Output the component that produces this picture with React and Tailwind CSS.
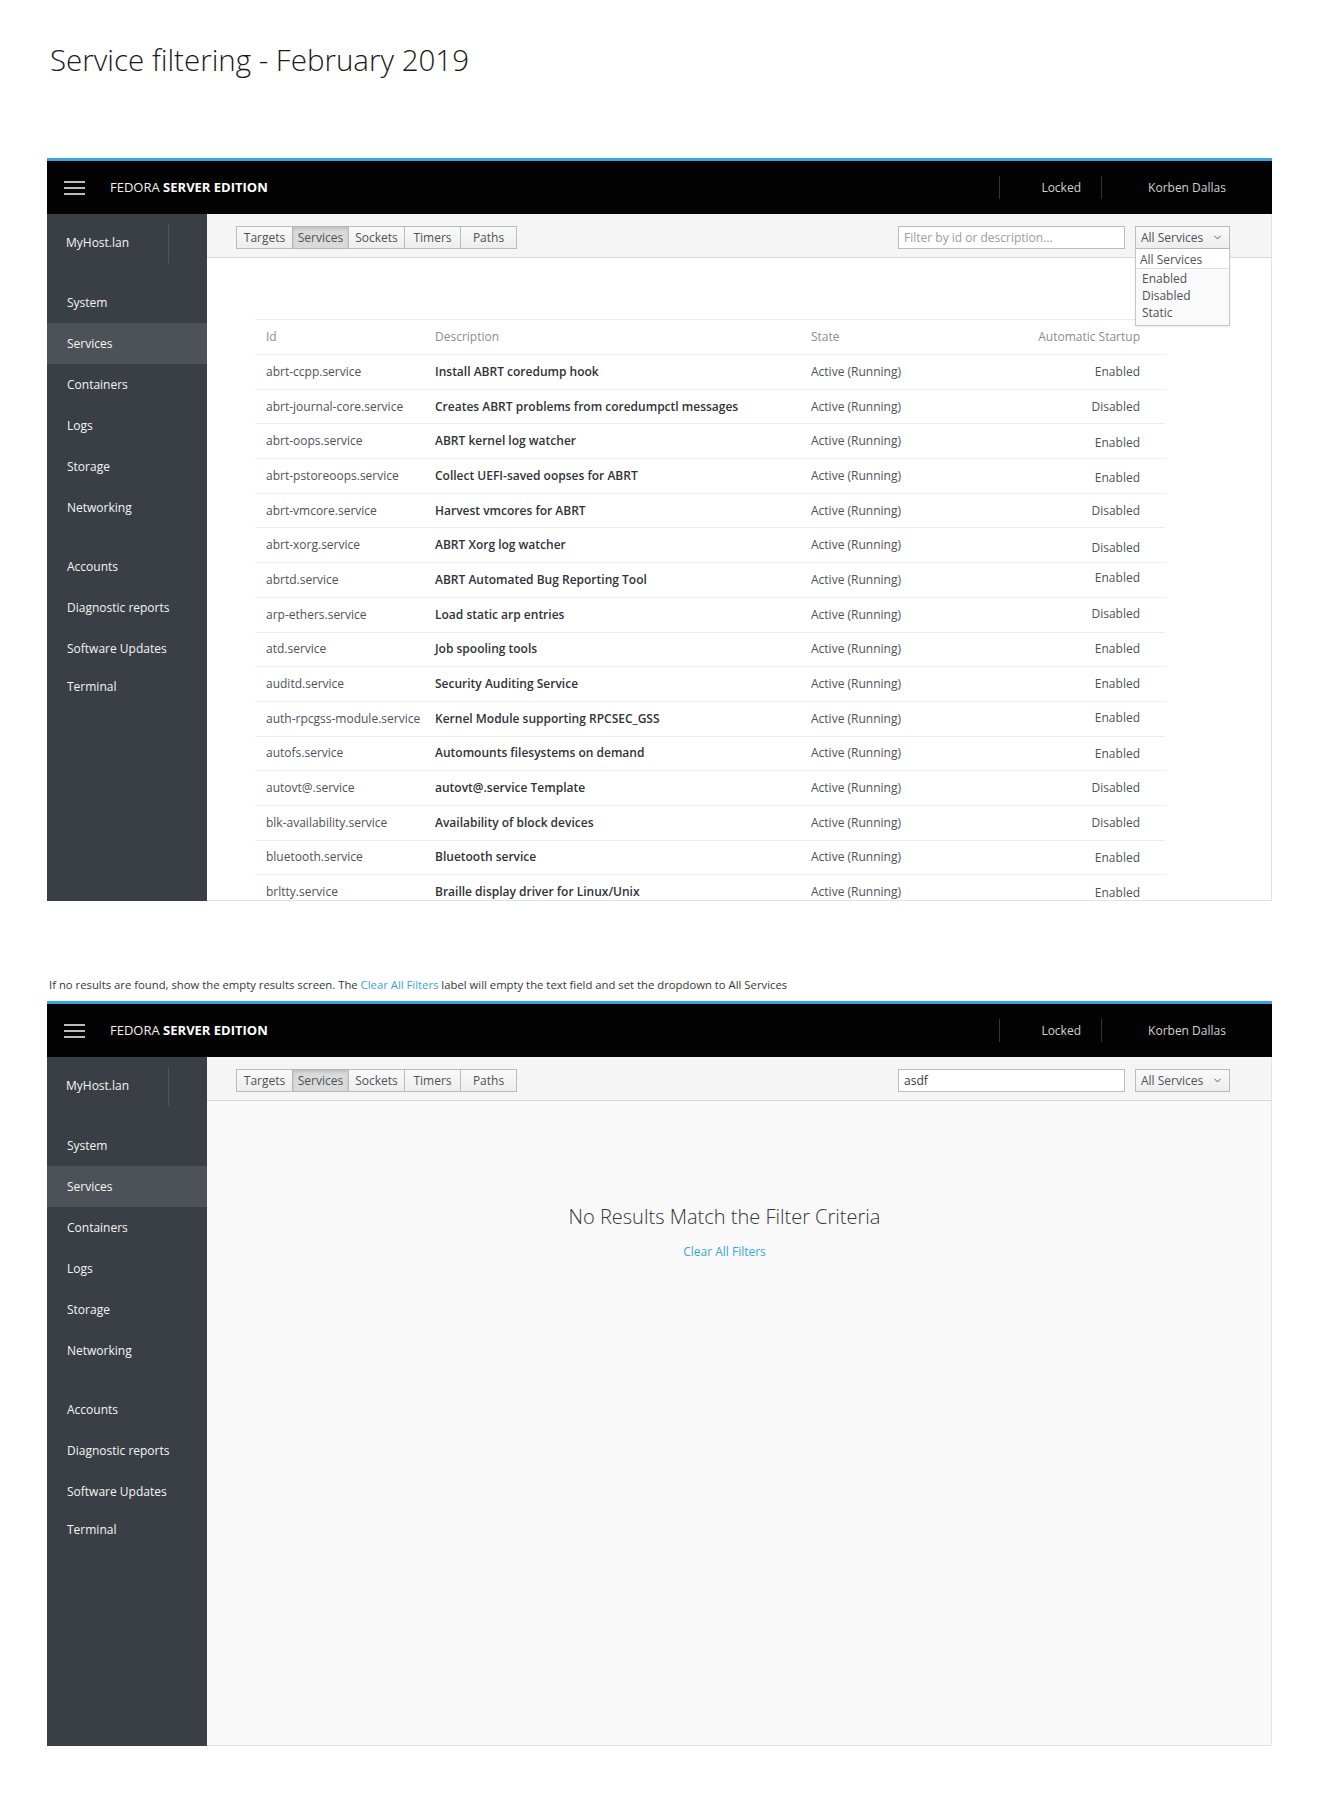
import { ChevronDown } from 'lucide-react';

const services = [
  { id: 'abrt-ccpp.service', desc: 'Install ABRT coredump hook', startup: 'Enabled', nudge: '' },
  { id: 'abrt-journal-core.service', desc: 'Creates ABRT problems from coredumpctl messages', startup: 'Disabled', nudge: '' },
  { id: 'abrt-oops.service', desc: 'ABRT kernel log watcher', startup: 'Enabled', nudge: 'pt-[4px]' },
  { id: 'abrt-pstoreoops.service', desc: 'Collect UEFI-saved oopses for ABRT', startup: 'Enabled', nudge: 'pt-[4px]' },
  { id: 'abrt-vmcore.service', desc: 'Harvest vmcores for ABRT', startup: 'Disabled', nudge: '' },
  { id: 'abrt-xorg.service', desc: 'ABRT Xorg log watcher', startup: 'Disabled', nudge: 'pt-[6px]' },
  { id: 'abrtd.service', desc: 'ABRT Automated Bug Reporting Tool', startup: 'Enabled', nudge: 'pb-[4px]' },
  { id: 'arp-ethers.service', desc: 'Load static arp entries', startup: 'Disabled', nudge: 'pb-[2px]' },
  { id: 'atd.service', desc: 'Job spooling tools', startup: 'Enabled', nudge: '' },
  { id: 'auditd.service', desc: 'Security Auditing Service', startup: 'Enabled', nudge: '' },
  { id: 'auth-rpcgss-module.service', desc: 'Kernel Module supporting RPCSEC_GSS', startup: 'Enabled', nudge: 'pb-[2px]' },
  { id: 'autofs.service', desc: 'Automounts filesystems on demand', startup: 'Enabled', nudge: 'pt-[2px]' },
  { id: 'autovt@.service', desc: 'autovt@.service Template', startup: 'Disabled', nudge: '' },
  { id: 'blk-availability.service', desc: 'Availability of block devices', startup: 'Disabled', nudge: '' },
  { id: 'bluetooth.service', desc: 'Bluetooth service', startup: 'Enabled', nudge: 'pt-[2px]' },
  { id: 'brltty.service', desc: 'Braille display driver for Linux/Unix', startup: 'Enabled', nudge: 'pt-[2px]' },
];

const navGroups = [
  ['System', 'Services', 'Containers', 'Logs', 'Storage', 'Networking'],
  ['Accounts', 'Diagnostic reports', 'Software Updates', 'Terminal'],
];

const tabs = ['Targets', 'Services', 'Sockets', 'Timers', 'Paths'];

function Hamburger() {
  return (
    <svg width="21" height="14" viewBox="0 0 21 14" className="shrink-0">
      <line x1="0" y1="1" x2="21" y2="1" stroke="#d1d1d1" strokeWidth="1.8" />
      <line x1="0" y1="7" x2="21" y2="7" stroke="#d1d1d1" strokeWidth="1.8" />
      <line x1="0" y1="13" x2="21" y2="13" stroke="#d1d1d1" strokeWidth="1.8" />
    </svg>
  );
}

function Masthead() {
  return (
    <div className="h-[53px] bg-[#030303] flex items-center pl-[17px]">
      <Hamburger />
      <div className="ml-[25px] text-[13px] text-[#f0f0f0]">
        FEDORA <span className="font-bold text-white">SERVER EDITION</span>
      </div>
      <div className="ml-auto flex items-center h-full">
        <div className="w-[102px] h-[23px] border-l border-[#333] flex items-center justify-end pr-[20px] text-[12px] text-[#d1d1d1]">
          Locked
        </div>
        <div className="w-[171px] h-[23px] border-l border-[#333] flex items-center justify-center text-[12px] text-[#d1d1d1]">
          Korben Dallas
        </div>
      </div>
    </div>
  );
}

function Sidebar() {
  return (
    <div className="w-[160px] shrink-0 bg-[#393f44] text-[12px] text-[#f5f5f5]">
      <div className="h-[58px] flex items-center pl-[19px]">
        <span>MyHost.lan</span>
        <div className="ml-auto mr-[38px] w-px h-[39px] bg-[#50565b]" />
      </div>
      <div className="mt-[10px]">
        {navGroups.map((group, gi) => (
          <div key={gi} className={gi > 0 ? 'mt-[18px]' : ''}>
            {group.map((item) => (
              <div
                key={item}
                className={`flex items-center pl-[20px] ${item === 'Terminal' ? 'h-[35px]' : 'h-[41px]'} ${item === 'Services' ? 'bg-[#4d5258]' : ''}`}
              >
                {item}
              </div>
            ))}
          </div>
        ))}
      </div>
    </div>
  );
}

function Toolbar({ query, menuOpen }) {
  return (
    <div className="h-[44px] shrink-0 bg-[#f5f5f5] border-b border-[#d8d8d8] flex items-start pt-[12px] pl-[29px] pr-[41px]">
      <div className="flex">
        {tabs.map((t, i) => (
          <div
            key={t}
            className={`h-[23px] flex items-center justify-center border text-[12px] text-[#4d5258] ${i === 0 ? 'w-[57px]' : 'w-[57px] -ml-px'} ${
              t === 'Services'
                ? 'bg-[#dadada] border-[#b5b5b5] shadow-[inset_0_2px_3px_rgba(0,0,0,0.12)]'
                : 'bg-gradient-to-b from-[#fafafa] to-[#ededed] border-[#bbb]'
            }`}
          >
            {t}
          </div>
        ))}
      </div>
      <div className="ml-auto w-[227px] h-[23px] bg-white border border-[#bbb] flex items-center px-[5px] text-[12px]">
        {query ? (
          <span className="text-[#363636]">{query}</span>
        ) : (
          <span className="text-[#9c9c9c]">Filter by id or description...</span>
        )}
      </div>
      <div className="relative ml-[10px] w-[95px]">
        <div className="h-[23px] border border-[#bbb] bg-gradient-to-b from-[#fafafa] to-[#ededed] flex items-center pl-[5px] pr-[6px] text-[12px] text-[#4d5258]">
          <span>All Services</span>
          <ChevronDown size={11} strokeWidth={1.8} className="ml-auto text-[#363636]" />
        </div>
        {menuOpen && (
          <div className="absolute left-0 top-[23px] w-[95px] bg-[#fafafa] border border-[#c6c6c6] border-t-0 text-[12px] text-[#4d5258] shadow-[0_1px_2px_rgba(0,0,0,0.08)]">
            <div className="h-[20px] flex items-center pt-[2px] pl-[4px] border-b border-[#e0e0e0] bg-white">All Services</div>
            <div className="pt-[1px] pb-[4px] pl-[6px] leading-[17px]">
              <div>Enabled</div>
              <div>Disabled</div>
              <div>Static</div>
            </div>
          </div>
        )}
      </div>
    </div>
  );
}

function ServiceTable() {
  return (
    <div className="ml-[48px] mt-[61px] w-[910px] border-t border-[#ededed] text-[12px]">
      <div className="h-[35px] flex items-center border-b border-[#ededed] text-[#8b8d8f]">
        <div className="w-[180px] pl-[11px]">Id</div>
        <div className="w-[376px]">Description</div>
        <div className="flex-1">State</div>
        <div className="pr-[25px]">Automatic Startup</div>
      </div>
      {services.map((s) => (
        <div key={s.id} className="h-[34.7px] flex items-center border-b border-[#ededed]">
          <div className="w-[180px] pl-[11px] text-[#4d5258]">{s.id}</div>
          <div className="w-[376px] font-semibold text-[#2f3338]">{s.desc}</div>
          <div className="flex-1 text-[#4d5258]">Active (Running)</div>
          <div className={`pr-[25px] text-right text-[#4d5258] ${s.nudge}`}>{s.startup}</div>
        </div>
      ))}
    </div>
  );
}

function EmptyState() {
  return (
    <div className="flex-1 bg-[#f9f9f9] flex flex-col items-center pr-[29px]">
      <div className="mt-[104px] text-[20px] leading-[24px] font-light text-[#363636]">
        No Results Match the Filter Criteria
      </div>
      <div className="mt-[15px] text-[12px] leading-[16px] text-[#39a5dc]">Clear All Filters</div>
    </div>
  );
}

function CockpitPanel({ empty }) {
  return (
    <div className="ml-[47px] w-[1225px] border-t-[3px] border-[#39a5dc]">
      <Masthead />
      <div className={`flex ${empty ? 'h-[689px]' : 'h-[687px]'}`}>
        <Sidebar />
        <div className="flex-1 flex flex-col overflow-hidden border-r border-b border-[#e3e3e3] bg-white">
          <Toolbar query={empty ? 'asdf' : ''} menuOpen={!empty} />
          {empty ? <EmptyState /> : <ServiceTable />}
        </div>
      </div>
    </div>
  );
}

export default function App() {
  return (
    <div className="w-[1320px] h-[1793px] bg-white font-['Open_Sans',sans-serif] overflow-hidden">
      <h1 className="pt-[41px] pl-[50px] text-[29.5px] leading-[37px] font-light text-[#1a1a1a]">
        Service filtering - February 2019
      </h1>
      <div className="mt-[80px]">
        <CockpitPanel />
      </div>
      <p className="mt-[76px] pl-[49px] h-[16px] text-[11.3px] leading-[16px] text-[#363636]">
        If no results are found, show the empty results screen. The{' '}
        <span className="text-[#39a5dc]">Clear All Filters</span> label will empty the text field and set the dropdown to All Services
      </p>
      <div className="mt-[8px]">
        <CockpitPanel empty />
      </div>
    </div>
  );
}
